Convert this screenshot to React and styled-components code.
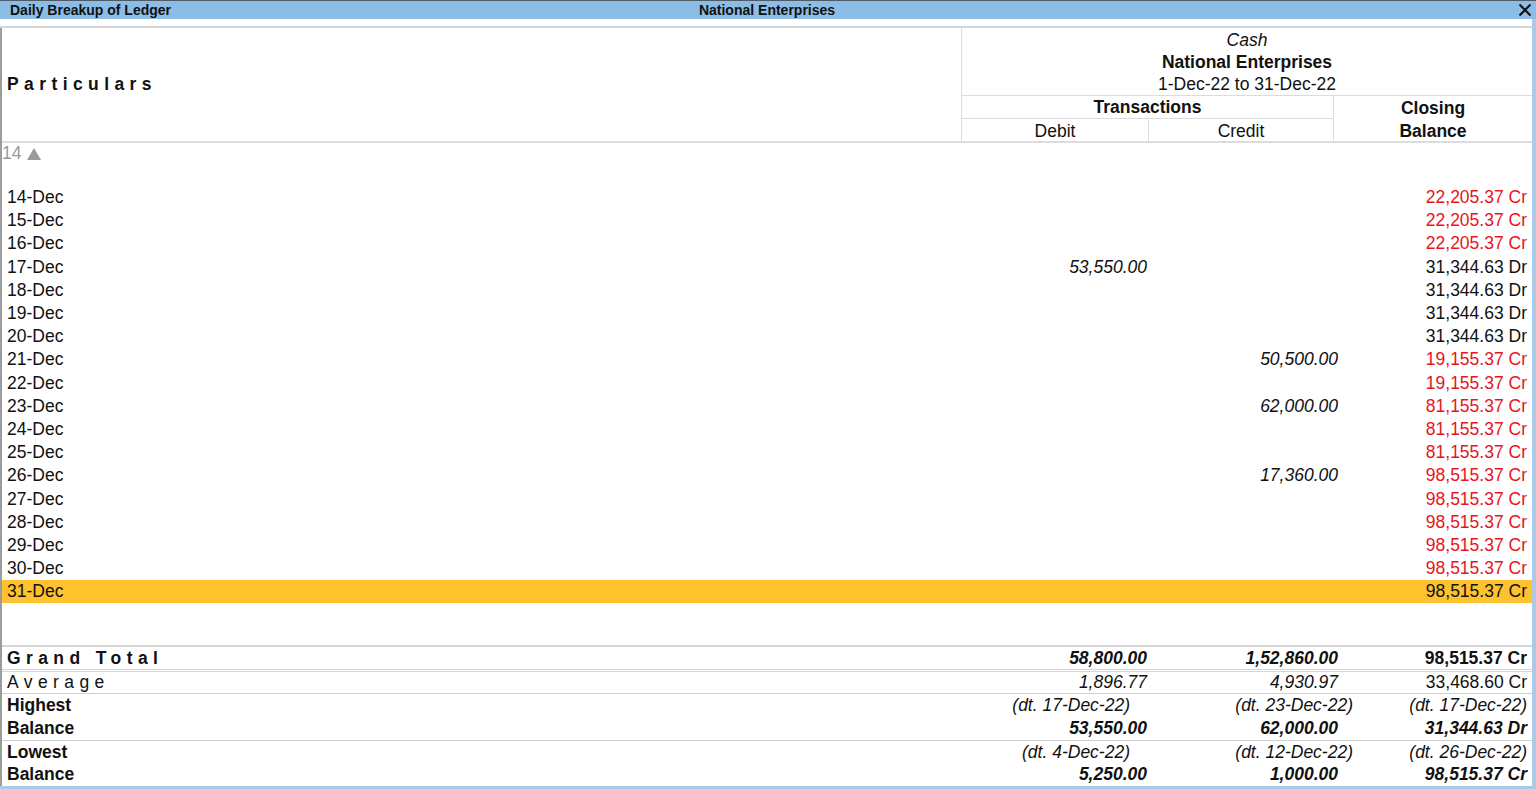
import React from "react";
import styled, { createGlobalStyle } from "styled-components";

const rows = [
  { date: "14-Dec", balance: "22,205.37 Cr" },
  { date: "15-Dec", balance: "22,205.37 Cr" },
  { date: "16-Dec", balance: "22,205.37 Cr" },
  { date: "17-Dec", debit: "53,550.00", balance: "31,344.63 Dr" },
  { date: "18-Dec", balance: "31,344.63 Dr" },
  { date: "19-Dec", balance: "31,344.63 Dr" },
  { date: "20-Dec", balance: "31,344.63 Dr" },
  { date: "21-Dec", credit: "50,500.00", balance: "19,155.37 Cr" },
  { date: "22-Dec", balance: "19,155.37 Cr" },
  { date: "23-Dec", credit: "62,000.00", balance: "81,155.37 Cr" },
  { date: "24-Dec", balance: "81,155.37 Cr" },
  { date: "25-Dec", balance: "81,155.37 Cr" },
  { date: "26-Dec", credit: "17,360.00", balance: "98,515.37 Cr" },
  { date: "27-Dec", balance: "98,515.37 Cr" },
  { date: "28-Dec", balance: "98,515.37 Cr" },
  { date: "29-Dec", balance: "98,515.37 Cr" },
  { date: "30-Dec", balance: "98,515.37 Cr" },
  { date: "31-Dec", balance: "98,515.37 Cr", selected: true },
];

const GlobalStyle = createGlobalStyle`
  html, body {
    margin: 0;
    padding: 0;
    background: #ffffff;
  }
  body {
    font-family: "Liberation Sans", Arial, sans-serif;
    color: #111111;
    overflow: hidden;
  }
`;

const Screen = styled.div`
  width: 1536px;
  height: 789px;
  display: flex;
  flex-direction: column;
  overflow: hidden;
`;

const TitleBar = styled.div`
  height: 18px;
  border-top: 1px solid #4e5a66;
  background: #8bbde6;
  display: grid;
  grid-template-columns: 1fr auto 1fr;
  align-items: center;
  font-size: 14px;
  font-weight: bold;
  color: #111;
  padding: 0 8px 0 6px;
`;

const TitleLeft = styled.span`
  padding-left: 4px;
`;

const TitleRight = styled.div`
  display: flex;
  justify-content: flex-end;
  align-items: center;
  margin-right: -4px;
`;

const Window = styled.div`
  flex: 1;
  display: flex;
  flex-direction: column;
  border-right: 4px solid #a9cbe9;
  border-bottom: 3px solid #a9cbe9;
  min-height: 0;
`;

const TopGap = styled.div`
  height: 7px;
  border-bottom: 2px solid #d6d6d6;
`;

const Panel = styled.div`
  flex: 1;
  display: flex;
  flex-direction: column;
  border-left: 2px solid #9c9c9c;
  font-size: 17.5px;
  min-height: 0;
`;

const Header = styled.div`
  display: grid;
  grid-template-columns: 960px 1fr;
  height: 113px;
  border-bottom: 2px solid #dcdcdc;
  overflow: hidden;
`;

const HeaderLabel = styled.div`
  display: flex;
  align-items: center;
  padding-left: 5px;
  font-weight: bold;
  letter-spacing: 5.4px;
  border-right: 1px solid #dcdcdc;
`;

const HeaderRight = styled.div`
  display: grid;
  grid-template-columns: 187px 185px 1fr;
  grid-template-rows: 68px 23px 22px;
`;

const LedgerTitle = styled.div`
  grid-column: 1 / -1;
  display: flex;
  flex-direction: column;
  align-items: center;
  justify-content: center;
  padding-top: 1px;
  line-height: 22px;
  border-bottom: 1px solid #dcdcdc;
`;

const HeadText = styled.span`
  font-style: ${({ $italic }) => ($italic ? "italic" : "normal")};
  font-weight: ${({ $bold }) => ($bold ? "bold" : "normal")};
`;

const GroupHead = styled.div`
  grid-column: 1 / 3;
  text-align: center;
  font-weight: bold;
  padding-top: 1px;
  line-height: 21px;
  border-bottom: 1px solid #dcdcdc;
  border-right: 1px solid #dcdcdc;
`;

const ClosingHead = styled.div`
  grid-column: 3;
  grid-row: 2 / 4;
  display: flex;
  flex-direction: column;
  align-items: center;
  justify-content: flex-start;
  padding-top: 1px;
  font-weight: bold;
  line-height: 22.5px;
`;

const SubHead = styled.div`
  text-align: center;
  padding-top: 2px;
  line-height: 20px;
  border-right: 1px solid #dcdcdc;
`;

const Body = styled.div`
  flex: 1;
  display: flex;
  flex-direction: column;
  min-height: 0;
`;

const PageMark = styled.div`
  height: 21px;
  line-height: 21px;
  color: #9a9a9a;
  margin-bottom: 22px;
  display: flex;
  align-items: center;
  gap: 6px;
`;

const Row = styled.div`
  display: grid;
  grid-template-columns: 959px 186px 191px 1fr;
  height: ${({ $h }) => $h || "23.2px"};
  align-items: center;
  background: ${({ $selected }) => ($selected ? "#fec22e" : "transparent")};
`;

const Name = styled.div`
  padding-left: 5px;
  white-space: nowrap;
  font-weight: ${({ $bold }) => ($bold ? "bold" : "normal")};
  letter-spacing: ${({ $spaced }) => ($spaced ? "5.4px" : "normal")};
`;

const Amount = styled.div`
  text-align: right;
  white-space: nowrap;
  padding-right: ${({ $pad }) => $pad || "0"};
  margin-right: ${({ $shift }) => $shift || "0"};
  font-style: ${({ $italic }) => ($italic ? "italic" : "normal")};
  font-weight: ${({ $bold }) => ($bold ? "bold" : "normal")};
  color: ${({ $red }) => ($red ? "#e8141c" : "#111")};
`;

const Filler = styled.div`
  flex: 1;
`;

const Footer = styled.div`
  display: flex;
  flex-direction: column;
  border-top: 2px solid #d6d6d6;
`;

const StatBlock = styled.div`
  display: flex;
  flex-direction: column;
  border-top: ${({ $rule }) => $rule};
`;

const CloseIcon = () => (
  <svg width="14" height="14" viewBox="0 0 14 14">
    <path d="M1.5 1.5 L12.5 12.5 M12.5 1.5 L1.5 12.5" stroke="#111" strokeWidth="2" fill="none" />
  </svg>
);

const Triangle = () => (
  <svg width="14" height="12" viewBox="0 0 14 12">
    <path d="M7 0 L14 12 L0 12 Z" fill="#9a9a9a" />
  </svg>
);

const App = () => {
  return (
    <Screen>
      <GlobalStyle />
      <TitleBar>
        <TitleLeft>Daily Breakup of Ledger</TitleLeft>
        <span>National Enterprises</span>
        <TitleRight>
          <CloseIcon />
        </TitleRight>
      </TitleBar>

      <Window>
        <TopGap />
        <Panel>
          <Header>
            <HeaderLabel>Particulars</HeaderLabel>
            <HeaderRight>
              <LedgerTitle>
                <HeadText $italic>Cash</HeadText>
                <HeadText $bold>National Enterprises</HeadText>
                <HeadText>1-Dec-22 to 31-Dec-22</HeadText>
              </LedgerTitle>
              <GroupHead>Transactions</GroupHead>
              <ClosingHead>
                <span>Closing</span>
                <span>Balance</span>
              </ClosingHead>
              <SubHead>Debit</SubHead>
              <SubHead>Credit</SubHead>
            </HeaderRight>
          </Header>

          <Body>
            <PageMark>
              <span>14</span>
              <Triangle />
            </PageMark>

            {rows.map((r) => (
              <Row key={r.date} $selected={r.selected}>
                <Name>{r.date}</Name>
                <Amount $italic>{r.debit}</Amount>
                <Amount $italic>{r.credit}</Amount>
                <Amount $pad="5px" $red={!r.selected && r.balance.endsWith("Cr")}>
                  {r.balance}
                </Amount>
              </Row>
            ))}

            <Filler />

            <Footer>
              <Row $h="22px">
                <Name $bold $spaced>Grand Total</Name>
                <Amount $italic $bold>58,800.00</Amount>
                <Amount $italic $bold>1,52,860.00</Amount>
                <Amount $bold $pad="5px">98,515.37 Cr</Amount>
              </Row>
              <StatBlock $rule="3px double #d6d6d6">
                <Row $h="21px">
                  <Name $spaced>Average</Name>
                  <Amount $italic>1,896.77</Amount>
                  <Amount $italic>4,930.97</Amount>
                  <Amount $pad="5px">33,468.60 Cr</Amount>
                </Row>
              </StatBlock>
              <StatBlock $rule="1px solid #cfcfcf">
                <Row $h="23px">
                  <Name $bold>Highest</Name>
                  <Amount $italic $pad="17px">(dt. 17-Dec-22)</Amount>
                  <Amount $italic $shift="-15px">(dt. 23-Dec-22)</Amount>
                  <Amount $italic $pad="5px">(dt. 17-Dec-22)</Amount>
                </Row>
                <Row $h="23px">
                  <Name $bold>Balance</Name>
                  <Amount $italic $bold>53,550.00</Amount>
                  <Amount $italic $bold>62,000.00</Amount>
                  <Amount $italic $bold $pad="5px">31,344.63 Dr</Amount>
                </Row>
              </StatBlock>
              <StatBlock $rule="1px solid #cfcfcf">
                <Row $h="22px">
                  <Name $bold>Lowest</Name>
                  <Amount $italic $pad="17px">(dt. 4-Dec-22)</Amount>
                  <Amount $italic $shift="-15px">(dt. 12-Dec-22)</Amount>
                  <Amount $italic $pad="5px">(dt. 26-Dec-22)</Amount>
                </Row>
                <Row $h="23px">
                  <Name $bold>Balance</Name>
                  <Amount $italic $bold>5,250.00</Amount>
                  <Amount $italic $bold>1,000.00</Amount>
                  <Amount $italic $bold $pad="5px">98,515.37 Cr</Amount>
                </Row>
              </StatBlock>
            </Footer>
          </Body>
        </Panel>
      </Window>
    </Screen>
  );
};

export default App;
